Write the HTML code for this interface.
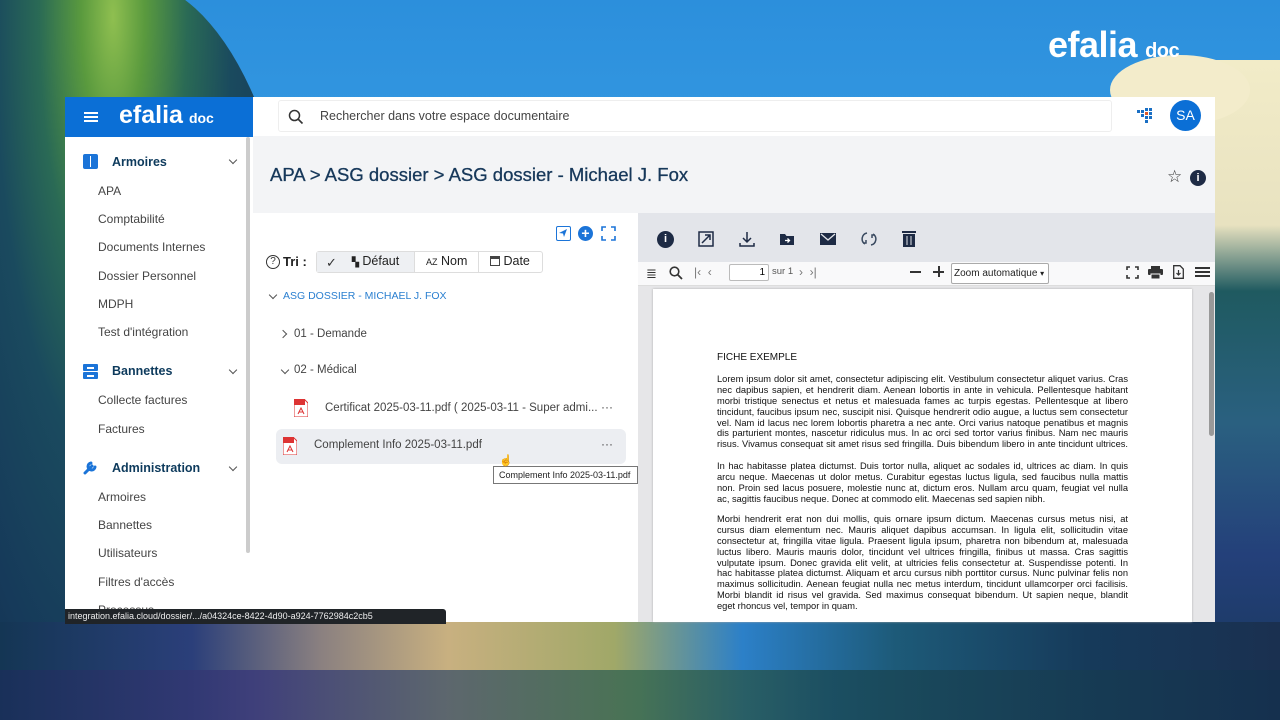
<!DOCTYPE html>
<html><head><meta charset="utf-8"><style>
*{margin:0;padding:0;box-sizing:border-box}
html,body{width:1280px;height:720px;overflow:hidden}
body{position:relative;font-family:"Liberation Sans",sans-serif;background:#2a8fdc}
.abs{position:absolute}
.bg1{left:0;top:0;width:1280px;height:720px;background:linear-gradient(180deg,#2c8fdc 0%,#3aa0e6 40%,#3b8fcf 70%,#1a3c66 100%)}
.tree{left:-40px;top:-20px;width:340px;height:740px;background:radial-gradient(ellipse at 45% 5%,#8fbf50 0%,#5a9a3e 12%,#2a6a55 28%,#1a4a5e 45%,#163a5a 70%,#102a48 100%);border-radius:0 50% 0 0}
.treeR{left:1195px;top:60px;width:90px;height:660px;background:linear-gradient(180deg,#f2ecc8 0%,#e8e2c0 25%,#1f5a60 35%,#2a6080 55%,#24407a 75%,#163656 100%)}
.ground{left:0;top:622px;width:1280px;height:98px;background:linear-gradient(90deg,#143654 0%,#2b3f7a 15%,#8a8080 25%,#c8b080 35%,#a0a868 48%,#2c80c8 58%,#1d5a78 70%,#163a5a 85%,#1a3050 100%)}
.ground2{left:0;top:670px;width:1280px;height:50px;background:linear-gradient(90deg,#1a2f5a,#3a3a7a 20%,#4a5a6a 35%,#3a6a50 50%,#1a4a58 65%,#14304e);opacity:.85}
.sidebar{left:65px;top:97px;width:188px;height:525px;background:#fff}
.sbhead{left:65px;top:97px;width:188px;height:40px;background:#0b6fd6;color:#fff}
.topbar{left:253px;top:97px;width:962px;height:39px;background:#fff}
.main{left:253px;top:136px;width:962px;height:486px;background:#f3f4f6}
.left{left:253px;top:213px;width:385px;height:409px;background:#fff}
.vtool{left:638px;top:213px;width:577px;height:49px;background:#e3e5ea}
.ptool{left:638px;top:262px;width:577px;height:24px;background:#f9f9fa;border-bottom:1px solid #ddd}
.pbg{left:638px;top:286px;width:577px;height:336px;background:#e6e6e8}
.page{left:653px;top:289px;width:539px;height:333px;background:#fff;box-shadow:0 0 2px #aaa}
.nav{color:#444;font-size:12px}
.sec{font-weight:bold;color:#0d3a5c;font-size:12.5px}
.chev{width:6px;height:6px;border-right:1.3px solid #555;border-bottom:1.3px solid #555;transform:rotate(45deg)}
.pdf{font-size:9.3px;color:#111;line-height:10.9px;width:411px}
.pdf div{text-align:justify;text-align-last:justify;height:10.9px;overflow:hidden;white-space:nowrap}
.pdf div.l{text-align-last:left}
</style></head><body>
<div class="abs bg1"></div>
<div class="abs tree"></div>
<div class="abs treeR"></div>
<div class="abs" style="left:1110px;top:55px;width:140px;height:70px;background:#f3eccb;border-radius:50%"></div>
<div class="abs ground"></div>
<div class="abs ground2"></div>
<div class="abs" style="left:1048px;top:24px;color:#fff;font-size:36px;font-weight:bold;letter-spacing:-0.5px">efalia<span style="font-size:20px;margin-left:8px">doc</span></div>

<div class="abs sidebar"></div>
<div class="abs sbhead">
 <div class="abs" style="left:19px;top:15px;width:14px;height:2px;background:#fff;box-shadow:0 4px #fff,0 8px #fff"></div>
 <div class="abs" style="left:54px;top:4px;font-size:25px;font-weight:bold">efalia<span style="font-size:14px;margin-left:6px">doc</span></div>
</div>
<div class="abs" style="left:246px;top:137px;width:4px;height:416px;background:#ccc;border-radius:2px"></div>
<div class="abs" style="left:83px;top:154px;width:15px;height:15px;background:#1b74d8;border-radius:2px"><div style="position:absolute;left:6.5px;top:2px;width:1.5px;height:11px;background:#fff"></div></div>
<div class="abs sec" style="left:112px;top:155px">Armoires</div>
<div class="abs chev" style="left:230px;top:157px"></div>
<div class="abs nav" style="left:98px;top:184px">APA</div>
<div class="abs nav" style="left:98px;top:212px">Comptabilité</div>
<div class="abs nav" style="left:98px;top:240px">Documents Internes</div>
<div class="abs nav" style="left:98px;top:269px">Dossier Personnel</div>
<div class="abs nav" style="left:98px;top:297px">MDPH</div>
<div class="abs nav" style="left:98px;top:325px">Test d'intégration</div>
<svg class="abs" style="left:83px;top:364px" width="15" height="15"><rect x="0" y="0" width="15" height="7" rx="1" fill="#1b74d8"/><rect x="0" y="8" width="15" height="7" rx="1" fill="#1b74d8"/><rect x="4" y="3" width="7" height="2" fill="#fff"/><rect x="4" y="11" width="7" height="2" fill="#fff"/></svg>
<div class="abs sec" style="left:112px;top:364px">Bannettes</div>
<div class="abs chev" style="left:230px;top:367px"></div>
<div class="abs nav" style="left:98px;top:393px">Collecte factures</div>
<div class="abs nav" style="left:98px;top:422px">Factures</div>
<svg class="abs" style="left:83px;top:460px" width="15" height="15"><path d="M2 13 L9 6 M8 3 a3.5 3.5 0 1 0 4 4" stroke="#1b74d8" stroke-width="3" fill="none" stroke-linecap="round"/></svg>
<div class="abs sec" style="left:112px;top:461px">Administration</div>
<div class="abs chev" style="left:230px;top:464px"></div>
<div class="abs nav" style="left:98px;top:490px">Armoires</div>
<div class="abs nav" style="left:98px;top:518px">Bannettes</div>
<div class="abs nav" style="left:98px;top:546px">Utilisateurs</div>
<div class="abs nav" style="left:98px;top:575px">Filtres d'accès</div>
<div class="abs nav" style="left:98px;top:603px">Processus</div>

<div class="abs topbar"></div>
<div class="abs" style="left:278px;top:100px;width:834px;height:32px;border:1px solid #eee;border-radius:3px;background:#fff"></div>
<svg class="abs" style="left:288px;top:109px" width="16" height="16"><circle cx="6.5" cy="6.5" r="5" stroke="#333" stroke-width="1.5" fill="none"/><path d="M10 10 L14.5 14.5" stroke="#333" stroke-width="1.6"/></svg>
<div class="abs" style="left:320px;top:109px;font-size:12.5px;color:#444">Rechercher dans votre espace documentaire</div>
<svg class="abs" style="left:1137px;top:108px" width="18" height="16"><g fill="#1a6fc4"><rect x="0" y="2" width="3" height="3"/><rect x="4" y="2" width="3" height="3"/><rect x="8" y="0" width="3" height="3"/><rect x="12" y="0" width="3" height="3"/><rect x="4" y="6" width="3" height="3"/><rect x="12" y="4" width="3" height="3"/><rect x="8" y="8" width="3" height="3"/><rect x="12" y="8" width="3" height="3"/><rect x="8" y="12" width="3" height="3"/></g><rect x="8" y="4" width="3" height="3" fill="#e05a2a"/></svg>
<div class="abs" style="left:1170px;top:100px;width:31px;height:31px;border-radius:50%;background:#0b6fd6;color:#fff;font-size:14px;text-align:center;line-height:31px">SA</div>

<div class="abs main"></div>
<div class="abs" style="left:270px;top:164px;font-size:18.5px;color:#17385a;-webkit-text-stroke:0.3px #17385a">APA &gt; ASG dossier &gt; ASG dossier - Michael J. Fox</div>
<div class="abs" style="left:1167px;top:167px;font-size:17px;color:#333">☆</div>
<div class="abs" style="left:1190px;top:170px;width:16px;height:16px;border-radius:50%;background:#1e2b45;color:#fff;font-size:11px;text-align:center;line-height:16px;font-weight:bold">i</div>

<div class="abs left"></div>
<div class="abs" style="left:556px;top:226px;width:15px;height:15px;border:1.5px solid #1b74d8;border-radius:2px"><svg width="12" height="12" style="position:absolute;left:0;top:0"><path d="M10 2 L2 6 L6 6.5 L7 10 Z" fill="#1b74d8"/></svg></div>
<div class="abs" style="left:578px;top:226px;width:15px;height:15px;border-radius:50%;background:#1b74d8;color:#fff;font-size:14px;text-align:center;line-height:15px;font-weight:bold">+</div>
<svg class="abs" style="left:601px;top:226px" width="15" height="15"><path d="M1 5V1H5M10 1H14V5M14 10V14H10M5 14H1V10" stroke="#1b74d8" stroke-width="1.6" fill="none"/></svg>
<div class="abs" style="left:266px;top:255px;width:14px;height:14px;border:1.3px solid #333;border-radius:50%;font-size:10px;text-align:center;line-height:12px;color:#333">?</div>
<div class="abs" style="left:283px;top:254px;font-size:13px;font-weight:bold;color:#222">Tri :</div>
<div class="abs" style="left:316px;top:251px;width:227px;height:22px;border:1px solid #ddd;border-radius:3px;background:#fff"></div>
<div class="abs" style="left:317px;top:252px;width:97px;height:20px;background:#eef0f3"></div>
<div class="abs" style="left:414px;top:252px;width:1px;height:20px;background:#ddd"></div>
<div class="abs" style="left:478px;top:252px;width:1px;height:20px;background:#ddd"></div>
<div class="abs" style="left:326px;top:255px;font-size:13px;color:#333">✓</div>
<div class="abs" style="left:352px;top:254px;font-size:12.5px;color:#222"><b style="font-size:9px">▚</b> Défaut</div>
<div class="abs" style="left:426px;top:254px;font-size:12.5px;color:#222"><span style="font-size:9px">AZ</span> Nom</div>
<div class="abs" style="left:490px;top:254px;font-size:12.5px;color:#222"><span style="display:inline-block;width:10px;height:10px;border:1.5px solid #444;border-top-width:3px;vertical-align:-1px"></span> Date</div>
<div class="abs chev" style="left:270px;top:292px"></div>
<div class="abs" style="left:283px;top:290px;font-size:10.5px;color:#2a7fd0">ASG DOSSIER - MICHAEL J. FOX</div>
<div class="abs chev" style="left:280px;top:331px;transform:rotate(-45deg)"></div>
<div class="abs nav" style="left:294px;top:328px;font-size:11.5px">01 - Demande</div>
<div class="abs chev" style="left:282px;top:367px"></div>
<div class="abs nav" style="left:294px;top:364px;font-size:11.5px">02 - Médical</div>
<div class="abs" style="left:276px;top:429px;width:350px;height:35px;background:#eceef2;border-radius:6px"></div>
<svg class="abs" style="left:294px;top:399px" width="14" height="18"><path d="M0 0H10L14 4V18H0Z" fill="#fff" stroke="#d33" stroke-width="1"/><rect x="0" y="0" width="11" height="6" fill="#d33"/><path d="M4 15 L7 9 L10 15 M5 13 H9" stroke="#d33" fill="none"/></svg>
<div class="abs nav" style="left:325px;top:402px;font-size:11.5px">Certificat 2025-03-11.pdf ( 2025-03-11 - Super admi...</div>
<div class="abs" style="left:601px;top:400px;font-size:12px;color:#444">···</div>
<svg class="abs" style="left:283px;top:437px" width="14" height="18"><path d="M0 0H10L14 4V18H0Z" fill="#fff" stroke="#d33" stroke-width="1"/><rect x="0" y="0" width="11" height="6" fill="#d33"/><path d="M4 15 L7 9 L10 15 M5 13 H9" stroke="#d33" fill="none"/></svg>
<div class="abs nav" style="left:314px;top:439px;font-size:11.5px">Complement Info 2025-03-11.pdf</div>
<div class="abs" style="left:601px;top:437px;font-size:12px;color:#444">···</div>
<div class="abs" style="left:493px;top:466px;width:145px;height:18px;background:#fff;border:1px solid #777;font-size:9px;line-height:16px;padding-left:5px;color:#222;white-space:nowrap;overflow:hidden">Complement Info 2025-03-11.pdf</div>
<div class="abs" style="left:499px;top:454px;font-size:11px">☝</div>

<div class="abs vtool"></div>
<div class="abs" style="left:657px;top:231px;width:17px;height:17px;border-radius:50%;background:#1e2b45;color:#fff;font-size:11px;font-weight:bold;text-align:center;line-height:17px">i</div>
<svg class="abs" style="left:698px;top:231px" width="16" height="16"><path d="M1 1H15V15H1Z M4 12 L12 4 M7 4H12V9" stroke="#1e2b45" stroke-width="1.5" fill="none"/></svg>
<svg class="abs" style="left:739px;top:231px" width="16" height="16"><path d="M8 1V10 M4 7L8 11L12 7 M1 12V15H15V12" stroke="#1e2b45" stroke-width="1.5" fill="none"/></svg>
<svg class="abs" style="left:779px;top:231px" width="16" height="16"><path d="M1 3H6L7.5 5H15V14H1Z" fill="#1e2b45"/><path d="M6 9.5H10 M8.5 7.5L10.5 9.5L8.5 11.5" stroke="#fff" stroke-width="1.3" fill="none"/></svg>
<svg class="abs" style="left:820px;top:231px" width="16" height="16"><rect x="0" y="2" width="16" height="12" fill="#1e2b45"/><path d="M1 3L8 9L15 3" stroke="#e3e5ea" stroke-width="1.3" fill="none"/></svg>
<svg class="abs" style="left:861px;top:231px" width="16" height="16"><path d="M6 2A6 6 0 0 0 4 13 M10 14A6 6 0 0 0 12 3 M2 12H5V9 M14 4H11V7" stroke="#3a4a60" stroke-width="1.5" fill="none"/></svg>
<svg class="abs" style="left:902px;top:230px" width="14" height="17"><rect x="0" y="1" width="14" height="2" fill="#1e2b45"/><rect x="1" y="4" width="12" height="13" fill="#1e2b45"/><path d="M5 6V15 M9 6V15" stroke="#e3e5ea" stroke-width="1"/></svg>

<div class="abs ptool"></div>
<div class="abs" style="left:646px;top:266px;font-size:13px;color:#333">≣</div>
<svg class="abs" style="left:669px;top:266px" width="14" height="14"><circle cx="5.5" cy="5.5" r="4.3" stroke="#333" stroke-width="1.6" fill="none"/><path d="M8.5 8.5L13 13" stroke="#333" stroke-width="1.8"/></svg>
<div class="abs" style="left:694px;top:265px;font-size:12px;color:#777">|‹ &nbsp;‹</div>
<div class="abs" style="left:729px;top:264px;width:40px;height:17px;border:1px solid #bbb;border-radius:2px;background:#fff;font-size:10px;text-align:right;padding-right:3px;line-height:15px">1</div>
<div class="abs" style="left:772px;top:266px;font-size:9.5px;color:#555">sur 1</div>
<div class="abs" style="left:799px;top:265px;font-size:12px;color:#777">› &nbsp;›|</div>
<div class="abs" style="left:910px;top:271px;width:11px;height:1.5px;background:#333"></div>
<div class="abs" style="left:933px;top:271px;width:11px;height:1.5px;background:#333"></div>
<div class="abs" style="left:938px;top:266px;width:1.5px;height:11px;background:#333"></div>
<div class="abs" style="left:951px;top:263px;width:98px;height:21px;border:1px solid #aaa;border-radius:2px;background:#fff;font-size:10px;line-height:19px;padding-left:2px;color:#222;white-space:nowrap">Zoom automatique <span style="font-size:8px">▾</span></div>
<svg class="abs" style="left:1126px;top:266px" width="13" height="13"><path d="M1 4V1H4M9 1H12V4M12 9V12H9M4 12H1V9" stroke="#333" stroke-width="1.6" fill="none"/></svg>
<svg class="abs" style="left:1148px;top:266px" width="15" height="13"><rect x="3" y="0" width="9" height="3" fill="#333"/><rect x="0" y="3" width="15" height="6" rx="1" fill="#333"/><rect x="3" y="8" width="9" height="5" fill="#333" stroke="#f9f9fa"/></svg>
<svg class="abs" style="left:1173px;top:265px" width="11" height="14"><path d="M0.7 0.7H7L10.3 4V13.3H0.7Z" stroke="#333" stroke-width="1.3" fill="none"/><path d="M5.5 5V10 M3.5 8L5.5 10L7.5 8" stroke="#333" stroke-width="1.2" fill="none"/></svg>
<div class="abs" style="left:1195px;top:267px;width:15px;height:2px;background:#333;box-shadow:0 4px #333,0 8px #333"></div>

<div class="abs pbg"></div>
<div class="abs" style="left:1209px;top:292px;width:5px;height:144px;background:#999;border-radius:3px"></div>
<div class="abs page"></div>
<div class="abs" style="left:717px;top:352px;font-size:10px;color:#111">FICHE EXEMPLE</div>
<div class="abs pdf" style="left:717px;top:374px">
<div>Lorem ipsum dolor sit amet, consectetur adipiscing elit. Vestibulum consectetur aliquet varius. Cras</div>
<div>nec dapibus sapien, et hendrerit diam. Aenean lobortis in ante in vehicula. Pellentesque habitant</div>
<div>morbi tristique senectus et netus et malesuada fames ac turpis egestas. Pellentesque at libero</div>
<div>tincidunt, faucibus ipsum nec, suscipit nisi. Quisque hendrerit odio augue, a luctus sem consectetur</div>
<div>vel. Nam id lacus nec lorem lobortis pharetra a nec ante. Orci varius natoque penatibus et magnis</div>
<div>dis parturient montes, nascetur ridiculus mus. In ac orci sed tortor varius finibus. Nam nec mauris</div>
<div>risus. Vivamus consequat sit amet risus sed fringilla. Duis bibendum libero in ante tincidunt ultrices.</div>
</div>
<div class="abs pdf" style="left:717px;top:461px">
<div>In hac habitasse platea dictumst. Duis tortor nulla, aliquet ac sodales id, ultrices ac diam. In quis</div>
<div>arcu neque. Maecenas ut dolor metus. Curabitur egestas luctus ligula, sed faucibus nulla mattis</div>
<div>non. Proin sed lacus posuere, molestie nunc at, dictum eros. Nullam arcu quam, feugiat vel nulla</div>
<div class="l">ac, sagittis faucibus neque. Donec at commodo elit. Maecenas sed sapien nibh.</div>
</div>
<div class="abs pdf" style="left:717px;top:514px">
<div>Morbi hendrerit erat non dui mollis, quis ornare ipsum dictum. Maecenas cursus metus nisi, at</div>
<div>cursus diam elementum nec. Mauris aliquet dapibus accumsan. In ligula elit, sollicitudin vitae</div>
<div>consectetur at, fringilla vitae ligula. Praesent ligula ipsum, pharetra non bibendum at, malesuada</div>
<div>luctus libero. Mauris mauris dolor, tincidunt vel ultrices fringilla, finibus ut massa. Cras sagittis</div>
<div>vulputate ipsum. Donec gravida elit velit, at ultricies felis consectetur at. Suspendisse potenti. In</div>
<div>hac habitasse platea dictumst. Aliquam et arcu cursus nibh porttitor cursus. Nunc pulvinar felis non</div>
<div>maximus sollicitudin. Aenean feugiat nulla nec metus interdum, tincidunt ullamcorper orci facilisis.</div>
<div>Morbi blandit id risus vel gravida. Sed maximus consequat bibendum. Ut sapien neque, blandit</div>
<div class="l">eget rhoncus vel, tempor in quam.</div>
</div>

<div class="abs" style="left:65px;top:609px;width:381px;height:15px;background:#202428;border-radius:0 3px 0 0;color:#eee;font-size:9px;line-height:15px;padding-left:3px;white-space:nowrap">integration.efalia.cloud/dossier/.../a04324ce-8422-4d90-a924-7762984c2cb5</div>
</body></html>
